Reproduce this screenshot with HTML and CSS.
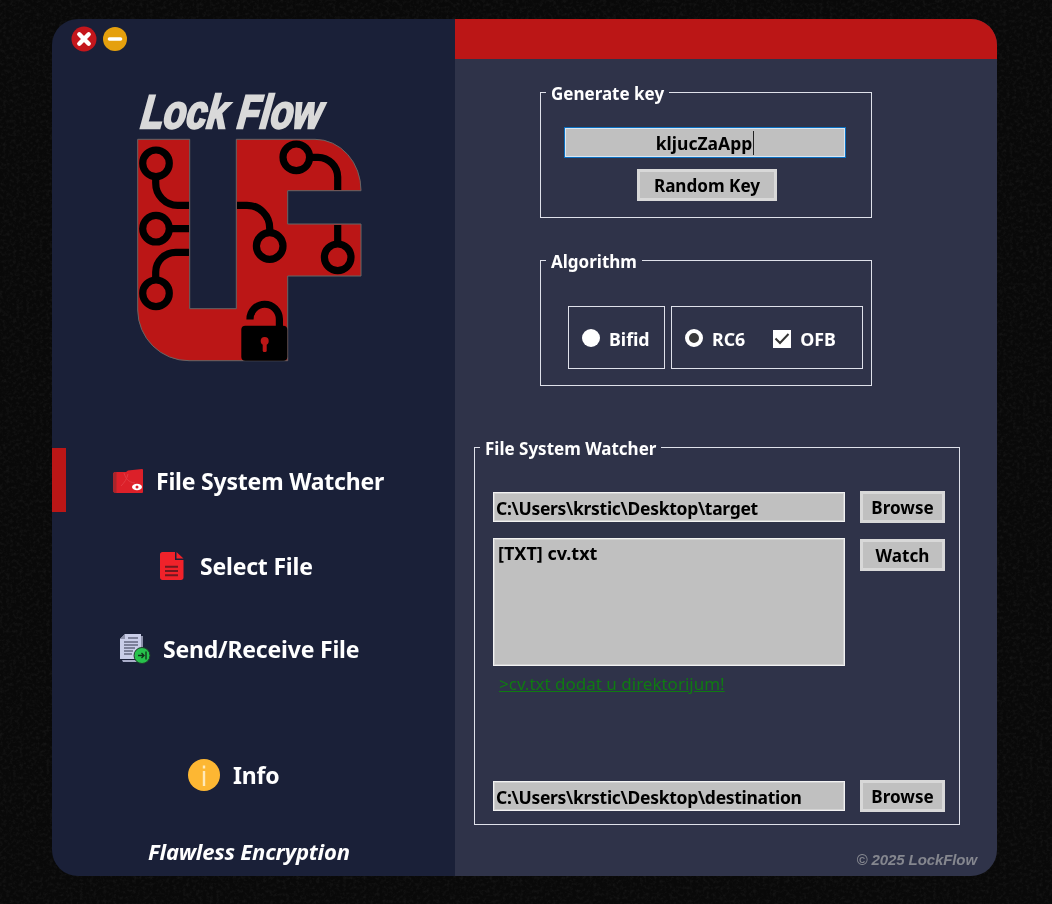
FILE: index.html
```html
<!DOCTYPE html>
<html lang="sr">
<head>
<meta charset="utf-8">
<title>Lock Flow</title>
<link rel="stylesheet" href="styles.css">
</head>
<body>
<svg class="texture" width="1052" height="904" aria-hidden="true">
  <filter id="grain" x="0" y="0" width="100%" height="100%"><feTurbulence type="fractalNoise" baseFrequency="0.3" numOctaves="5" seed="11"/><feColorMatrix type="matrix" values="0 0 0 0 0.6  0 0 0 0 0.6  0 0 0 0 0.6  2.2 0 0 0 -0.95"/></filter>
  <rect width="1052" height="904" fill="#090909"/>
  <rect width="1052" height="904" filter="url(#grain)" opacity="0.06"/>
</svg>
<div class="window">
  <aside class="sidebar">
    <div class="controls">
      <svg width="26" height="26" viewBox="0 0 26 26"><circle cx="13" cy="13" r="12.5" fill="#c4161c"/><path d="M8.300 8.300 17.700 17.700M17.700 8.300 8.300 17.700" stroke="#fff" stroke-width="4.400" stroke-linecap="round"/></svg>
      <svg width="24" height="24" viewBox="0 0 24 24"><circle cx="12" cy="12" r="12" fill="#e5a00d"/><path d="M6.500 12H17.500" stroke="#fff" stroke-width="3.600" stroke-linecap="round"/></svg>
    </div>
    <div class="wordmark">Lock Flow</div>
    <svg class="logo" width="240" height="230" viewBox="130 135 240 230">
      <path d="M137.700 139.300H189.700V308.700H236.300V139.300H315A46 51 0 0 1 361 190.700H287.700V224H361V276H287.700V360.700H189A51 51 0 0 1 137.700 310Z" fill="#bb1616" stroke="#666" stroke-width="1"/>
      <g fill="none" stroke="#000" stroke-width="7.200">
        <circle cx="156" cy="163.300" r="13.300"/>
        <circle cx="156" cy="228.700" r="13.300"/>
        <circle cx="156" cy="293.300" r="13.300"/>
        <circle cx="296.300" cy="157.300" r="13.300"/>
        <circle cx="269.700" cy="246" r="13.300"/>
        <circle cx="337.700" cy="257.300" r="13.300"/>
        <path d="M155.700 177V183A22 22 0 0 0 177.700 205.300H189"/>
        <path d="M169 228.700H189"/>
        <path d="M155.700 280V272A20 20 0 0 1 175.700 252.300H189"/>
        <path d="M309 157.300H318A20 20 0 0 1 337.700 177V190"/>
        <path d="M237 205.300H247A22.700 22.700 0 0 1 269.700 228V233"/>
        <path d="M337.700 225V244"/>
        <path d="M250 319.500A14.700 15 0 0 1 279.400 319V327"/>
      </g>
      <rect x="241.300" y="325.700" width="46" height="35" rx="4"/>
      <circle cx="264.700" cy="341" r="4" fill="#bb1616"/>
      <rect x="262.700" y="342" width="4" height="10" rx="1.500" fill="#bb1616"/>
    </svg>
    <nav class="nav">
      <div class="nav-item nav-item-active nav-watch">
        <svg width="30" height="24" viewBox="0 0 30 24"><path d="M0 5C0 4 1 3 2 3H13L15 1.500 29 0Q30 0 30 1V23Q30 24 29 24H3Q0 24 0 21Z" fill="#dc2029"/><path d="M0 5C0 4 1 3 2 3H3.500V24H3Q0 24 0 21Z" fill="#a8252b"/><path d="M11 4C13 10 15 13 22 14M15 5C14 10 11 14 8 17" fill="none" stroke="#e33a42" stroke-width="1"/><ellipse cx="24" cy="18" rx="5" ry="3.200" fill="#fff"/><circle cx="24" cy="18" r="1.500" fill="#d9202a"/></svg>
        <span>File System Watcher</span>
      </div>
      <div class="nav-item nav-select">
        <svg width="24" height="28" viewBox="0 0 24 28"><path d="M2.500 0H15V8H23.500V25.500C23.500 27 22.500 28 21 28H2.500C1 28 0 27 0 25.500V2.500C0 1 1 0 2.500 0Z" fill="#f0222a"/><path d="M16.500 0 23.500 6.500H16.500Z" fill="#f0222a"/><path d="M5 14.700H18M5 19H18M5 23.300H18" stroke="#701820" stroke-width="2"/></svg>
        <span>Select File</span>
      </div>
      <div class="nav-item nav-send">
        <svg width="31" height="30" viewBox="0 0 31 30"><path d="M6 2H23V24H6Z" fill="#8d91aa"/><path d="M5 0H21V25H0V5Z" fill="#c9cde8"/><path d="M0 5H5V0Z" fill="#8d91aa"/><path d="M8 4H18M4 8H18M4 11H18M4 14H15M4 17H13M4 20H12" stroke="#33364d" stroke-width="1.200"/><path d="M2 26H21V28H3Z" fill="#a9adc9"/><circle cx="22" cy="21.500" r="8" fill="#27c24c" stroke="#1f3a2c" stroke-width="1"/><path d="M18 21.500H23.500M21.500 19 24 21.500 21.500 24M26 17.500V25.500" fill="none" stroke="#10301a" stroke-width="1.300"/></svg>
        <span>Send/Receive File</span>
      </div>
      <div class="nav-item nav-info">
        <svg width="32" height="32" viewBox="0 0 32 32"><circle cx="16" cy="16" r="16" fill="#fdb733"/><rect x="14.800" y="12" width="2.400" height="15" fill="#ffe9b8"/><rect x="14.800" y="6.500" width="2.400" height="3" fill="#ffe9b8"/></svg>
        <span>Info</span>
      </div>
    </nav>
    <p class="tagline">Flawless Encryption</p>
  </aside>
  <main class="content">
    <div class="topbar"></div>
    <fieldset class="group group-key">
      <legend>Generate key</legend>
      <div class="key-field"><span class="key-value">kljucZaApp</span></div>
      <button class="btn btn-random" type="button">Random Key</button>
    </fieldset>
    <fieldset class="group group-algo">
      <legend>Algorithm</legend>
      <div class="algo-row">
        <div class="algo-box algo-box-one">
          <span class="radio"></span><span class="opt-label">Bifid</span>
        </div>
        <div class="algo-box algo-box-two">
          <span class="radio radio-on"></span><span class="opt-label">RC6</span>
          <svg class="check" width="18" height="18" viewBox="0 0 18 18"><rect width="18" height="18" fill="#fff"/><path d="M2.500 8.500 7 13 15.500 4" fill="none" stroke="#333" stroke-width="2"/></svg>
          <span class="opt-label">OFB</span>
        </div>
      </div>
    </fieldset>
    <fieldset class="group group-watch">
      <legend>File System Watcher</legend>
      <div class="watch-grid">
        <div class="field">C:\Users\krstic\Desktop\target</div>
        <button class="btn" type="button">Browse</button>
        <div class="listbox">[TXT] cv.txt</div>
        <button class="btn btn-watch" type="button">Watch</button>
        <a class="status" href="#">&gt;cv.txt dodat u direktorijum!</a>
        <div class="field field-dest">C:\Users\krstic\Desktop\destination</div>
        <button class="btn btn-dest" type="button">Browse</button>
      </div>
    </fieldset>
    <p class="copyright">© 2025 LockFlow</p>
  </main>
</div>
</body>
</html>
```
FILE: styles.css
```css
* { box-sizing: border-box; }
html, body { margin: 0; height: 100%; }
body {
  width: 1052px;
  height: 904px;
  padding: 19px 55px 0 52px;
  overflow: hidden;
  font-family: "Noto Sans", "Open Sans", sans-serif;
  font-weight: 700;
  color: #fff;
  background: #090909;
}
.texture { position: fixed; left: 0; top: 0; z-index: -1; }
.window {
  display: grid;
  grid-template-columns: 403px 542px;
  width: 945px;
  height: 857px;
  border-radius: 26px;
  overflow: hidden;
}
.sidebar { background: #1a2038; display: flex; flex-direction: column; }
.controls { display: flex; align-items: center; gap: 6px; padding: 7px 0 0 19px; height: 33px; }
.wordmark {
  flex: none;
  height: 50px;
  margin: 33px 0 0 88px;
  font-family: "Liberation Sans", sans-serif;
  font-style: italic;
  font-weight: 700;
  font-size: 47px;
  line-height: 54px;
  white-space: nowrap;
  color: #d9d9d9;
  -webkit-text-stroke: 2.4px #d9d9d9;
  transform: skewX(-7deg) scaleX(0.787);
  transform-origin: 0 43px;
}
.logo { display: block; margin: 0 0 0 78px; flex: none; }
.nav { margin-top: 83px; display: flex; flex-direction: column; }
.nav-item {
  display: flex;
  align-items: center;
  height: 64px;
  gap: 13px;
  border-left: 14px solid transparent;
  font-size: 23px;
  letter-spacing: -0.2px;
}
.nav-item svg { flex: none; }
.nav-item-active { border-left-color: #bb1616; }
.nav-watch { padding-left: 47px; padding-top: 2px; }
.nav-select { padding-left: 94px; margin-top: 22px; gap: 16px; }
.nav-send { padding-left: 54px; margin-top: 19px; gap: 12px; }
.nav-info { padding-left: 122px; margin-top: 62px; }
.tagline {
  margin: 31px 0 0;
  height: 26px;
  line-height: 26px;
  padding-left: 96px;
  font-size: 22px;
  font-style: italic;
  letter-spacing: -0.2px;
}
.content { background: #2f3349; display: flex; flex-direction: column; }
.topbar { height: 40px; background: #bb1616; flex: none; }
.group {
  margin: 0;
  padding: 0;
  border: 1px solid #dfe1ea;
  min-width: 0;
}
.group legend {
  margin-left: 5px;
  padding: 0 5px;
  height: 26px;
  line-height: 30px;
  font-size: 17px;
}
.group-key { margin: 20px 0 0 85px; width: 332px; padding: 22px 0 16px; display: flex; flex-direction: column; align-items: center; }
.key-field {
  width: 282px;
  height: 31px;
  margin-right: 2px;
  border: 1px solid #0a6fc0;
  outline: 1px solid #d8e6f2;
  outline-offset: -2px;
  background: #c0c0c0;
  color: #000;
  font-size: 17.5px;
  line-height: 31px;
  text-align: center;
}
.key-value { border-right: 1px solid #222; padding-right: 1px; }
.btn {
  display: block;
  padding: 2px 0 0;
  border: 3px solid #d8d8d8;
  background: #c0c0c0;
  color: #000;
  font: inherit;
  font-size: 17.1px;
  line-height: 24px;
  height: 32px;
}
.btn-random { width: 140px; margin-top: 11px; margin-left: 2px; }
.group-algo { margin: 29px 0 0 85px; width: 332px; padding: 33px 0 16px; }
.algo-row { display: flex; gap: 6px; margin-left: 27px; }
.algo-box { display: flex; align-items: center; height: 63px; padding-top: 2px; border: 1px solid #dfe1ea; font-size: 17.8px; }
.algo-box-one { width: 97px; padding-left: 13px; }
.algo-box-two { width: 192px; padding-left: 13px; }
.radio { width: 18px; height: 18px; border-radius: 50%; background: #fff; flex: none; margin-top: -2px; margin-right: 9px; }
.radio-on { background: #3a3a3a; border: 4px solid #fff; }
.check { margin-left: 28px; margin-right: 9px; flex: none; }
.group-watch { margin: 48px 0 0 19px; width: 486px; padding: 31px 0 12px; }
.watch-grid {
  display: grid;
  grid-template-columns: 352px 85px;
  column-gap: 15px;
  align-items: start;
  margin-left: 18px;
}
.field {
  height: 30px;
  margin-top: 1px;
  border: 1px solid #f2f2f2;
  box-shadow: inset 0 0 0 1px #d2d2d2;
  background: #c0c0c0;
  color: #000;
  font-size: 17.500px;
  letter-spacing: -0.3px;
  line-height: 30px;
  padding-left: 2px;
  white-space: nowrap;
}
.listbox {
  height: 128px;
  margin-top: 15px;
  border: 1px solid #f2f2f2;
  box-shadow: inset 0 0 0 1px #d2d2d2;
  background: #c0c0c0;
  color: #000;
  font-size: 18px;
  line-height: 24px;
  padding: 2px 0 0 4px;
}
.btn-watch { margin-top: 16px; }
.status {
  grid-column: 1 / 3;
  margin: 5px 0 0 6px;
  height: 26px;
  line-height: 26px;
  font-size: 17px;
  font-weight: 400;
  color: #0f7a12;
}
.field-dest { margin-top: 84px; }
.btn-dest { margin-top: 83px; }
.copyright {
  margin: 24px 0 0;
  padding-right: 20px;
  line-height: 22px;
  text-align: right;
  font-family: "Liberation Sans", sans-serif;
  font-style: italic;
  font-size: 15px;
  letter-spacing: -0.1px;
  color: #85878f;
}
```
